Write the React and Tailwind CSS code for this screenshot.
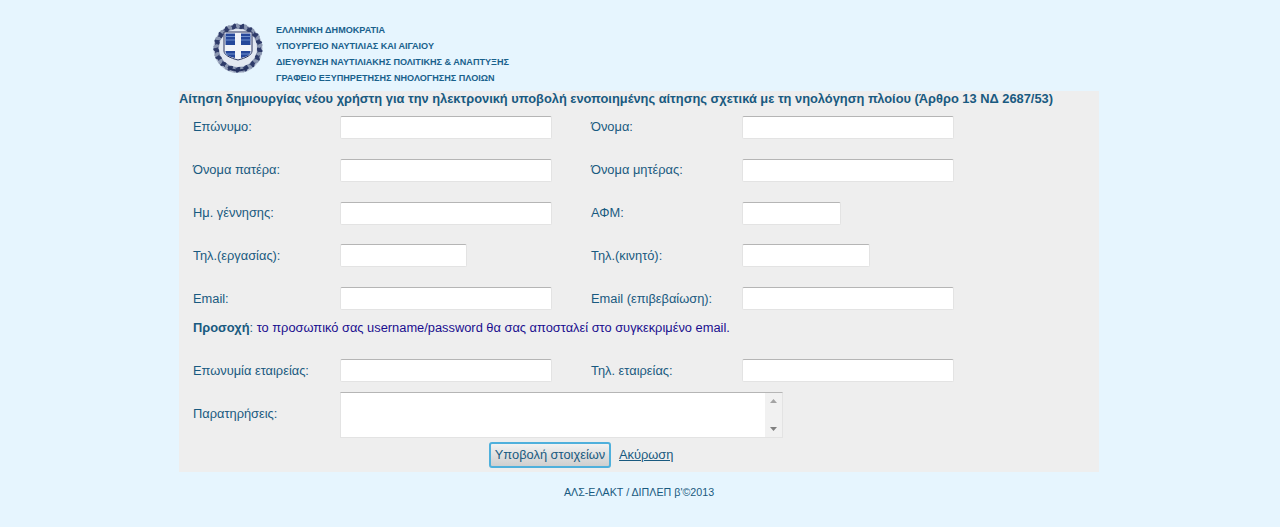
const inputCls = "block h-[23px] bg-white border border-[#e3e3e3] border-t-[#b5b5b5] rounded-[2px] box-border";

function Seal() {
  const leaves = [];
  for (let i = 0; i < 34; i++) {
    const a = (i / 34) * 360;
    leaves.push(
      <ellipse key={i} cx="25" cy="4.400" rx="1.7" ry="3.4" fill={i % 2 ? "#2e3b69" : "#8b97b1"} transform={`rotate(${a} 25 26) rotate(${i % 2 ? 28 : -28} 25 4.4)`} />
    );
  }
  return (
    <svg width="50" height="52" viewBox="0 0 50 52" className="block">
      <defs>
        <filter id="blur"><feGaussianBlur stdDeviation="0.6" /></filter>
      </defs>
      <g filter="url(#blur)">
        <circle cx="25" cy="26.500" r="24.500" fill="#b4bdd0" />
        <circle cx="25" cy="26" r="21.500" fill="none" stroke="#3a4674" strokeWidth="3.600" />
        <g>{leaves}</g>
        <circle cx="25" cy="26" r="19" fill="#e3e8f1" />
        <path d="M11 10h28v19c0 4-6 7-14 9c-8-2-14-5-14-9z" fill="#f2f4f9" stroke="#2a3560" strokeWidth="1" />
        <path d="M12.500 11.500h9.500v11.500h-9.500z M28 11.500h9.500v11.500h-9.500z M12.500 29h9.500v7c-5-1-9.500-3-9.500-6.500z M28 29h9.500v0.500c0 3.500-4.500 5.500-9.500 6.500z" fill="#27469a" />
        <path d="M12.500 14.500h9.500M12.500 18h9.500M28 14.500h9.500M28 18h9.500M12.500 32h9.500M28 32h9.500" stroke="#6f90cc" strokeWidth="1" />
        <path d="M15 45c3 2.500 7 3.500 10 3.500s7-1 10-3.500" fill="none" stroke="#25315e" strokeWidth="2" />
      </g>
    </svg>
  );
}

function Field({ label, width = "w-[212px]", labelWidth = "w-[147px]", raised }) {
  return (
    <div className="flex items-center">
      <span className={`${labelWidth} shrink-0 ${raised ? "leading-[19px] pb-[2px]" : ""}`}>{label}</span>
      <span className={`${inputCls} ${width}`} />
    </div>
  );
}

function Row({ left, right, lw = "w-[212px]", rw = "w-[212px]", h = "h-[43px]", raised = false }) {
  return (
    <div className={`flex ${h} pl-[14px]`}>
      <div className="w-[398px] shrink-0"><Field label={left} width={lw} raised={raised} /></div>
      <div><Field label={right} width={rw} labelWidth="w-[151px]" raised={raised} /></div>
    </div>
  );
}

export default function App() {
  return (
    <div className="min-h-[527px] bg-[#e6f5fe] text-[#195a80] text-[12.85px] leading-[22px]" style={{ fontFamily: '"Liberation Sans", Arial, sans-serif' }}>
      <div className="w-[920px] ml-[179px]">
        <header className="h-[91px] flex pl-[34px] pt-[22px]">
          <Seal />
          <div className="ml-[13px] text-[9.08px] leading-[16px] font-bold text-[#19618c]">
            <div>ΕΛΛΗΝΙΚΗ ΔΗΜΟΚΡΑΤΙΑ</div>
            <div>ΥΠΟΥΡΓΕΙΟ ΝΑΥΤΙΛΙΑΣ ΚΑΙ ΑΙΓΑΙΟΥ</div>
            <div>ΔΙΕΥΘΥΝΣΗ ΝΑΥΤΙΛΙΑΚΗΣ ΠΟΛΙΤΙΚΗΣ &amp; ΑΝΑΠΤΥΞΗΣ</div>
            <div>ΓΡΑΦΕΙΟ ΕΞΥΠΗΡΕΤΗΣΗΣ ΝΗΟΛΟΓΗΣΗΣ ΠΛΟΙΩΝ</div>
          </div>
        </header>
        <main className="bg-[#eeeeee] h-[381px] flex flex-col">
          <h1 className="h-[25px] font-bold leading-[15px] whitespace-nowrap">
            Αίτηση δημιουργίας νέου χρήστη για την ηλεκτρονική υποβολή ενοποιημένης αίτησης σχετικά με τη νηολόγηση πλοίου (Άρθρο 13 ΝΔ 2687/53)
          </h1>
          <Row left="Επώνυμο:" right="Όνομα:" raised />
          <Row left="Όνομα πατέρα:" right="Όνομα μητέρας:" raised />
          <Row left="Ημ. γέννησης:" right="ΑΦΜ:" rw="w-[99px]" h="h-[42px]" raised />
          <Row left="Τηλ.(εργασίας):" right="Τηλ.(κινητό):" lw="w-[127px]" rw="w-[128px]" />
          <Row left="Email:" right="Email (επιβεβαίωση):" h="h-[32px]" />
          <p className="h-[40px] pl-[14px] text-[#1a0f8f] leading-[18px]">
            <strong className="text-[#195a80]">Προσοχή</strong><span className="text-[#195a80]">:</span> το προσωπικό σας username/password θα σας αποσταλεί στο συγκεκριμένο email.
          </p>
          <Row left="Επωνυμία εταιρείας:" right="Τηλ. εταιρείας:" h="h-[33px]" />
          <div className="flex pl-[14px] h-[50px]">
            <span className="w-[147px] shrink-0 pt-[11px]">Παρατηρήσεις:</span>
            <div className="w-[443px] h-[46px] flex bg-white border border-[#e3e3e3] border-t-[#b5b5b5] box-border">
              <div className="flex-1" />
              <div className="w-[17px] bg-[#f1f1f1] flex flex-col items-center justify-between py-[6px]">
                <svg width="7" height="4" viewBox="0 0 7 4"><path d="M3.5 0L7 4H0z" fill="#a3a3a3" /></svg>
                <svg width="7" height="4" viewBox="0 0 7 4"><path d="M3.5 4L7 0H0z" fill="#808080" /></svg>
              </div>
            </div>
          </div>
          <div className="flex items-center h-[26px] pl-[310px]">
            <button className="h-[26px] w-[122px] rounded-[3px] border-2 border-[#4fb0dc] bg-gradient-to-b from-[#f2f2f2] to-[#cfcfcf] text-[#195a80] text-[12.85px] leading-none whitespace-nowrap box-border">Υποβολή στοιχείων</button>
            <a className="ml-[8px] underline text-[#195a80]">Ακύρωση</a>
          </div>
        </main>
        <footer className="text-center text-[10.7px] leading-[14px] mt-[13px]">ΑΛΣ-ΕΛΑΚΤ / ΔΙΠΛΕΠ β'©2013</footer>
      </div>
    </div>
  );
}
